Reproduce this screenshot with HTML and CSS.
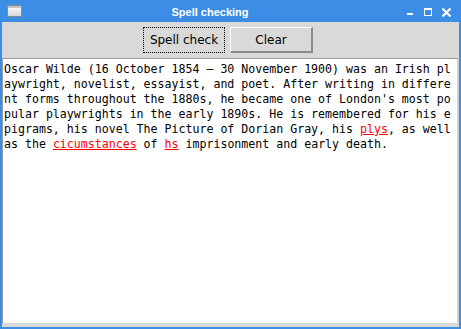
FILE: index.html
```html
<!DOCTYPE html>
<html>
<head>
<meta charset="utf-8">
<link rel="stylesheet" href="styles.css">
</head>
<body>
<div class="window">
  <div class="titlebar">
    <svg class="app-icon" width="15" height="12" viewBox="0 0 15 12">
      <defs>
        <linearGradient id="g" x1="0" y1="0" x2="0" y2="1">
          <stop offset="0" stop-color="#ffffff"/>
          <stop offset="1" stop-color="#d8d8d8"/>
        </linearGradient>
      </defs>
      <rect x="0.5" y="0.5" width="14" height="11" rx="1" fill="url(#g)" stroke="#8a8a8a"/>
      <rect x="1" y="1" width="13" height="2" fill="#c4c4c4"/>
    </svg>
    <div class="title">Spell checking</div>
    <svg class="controls" width="52" height="22" viewBox="0 0 52 22">
      <rect x="3" y="13" width="6" height="2" fill="#fff"/>
      <rect x="20.5" y="8.5" width="7" height="7" fill="none" stroke="#fff"/>
      <rect x="20" y="8" width="8" height="2" fill="#fff"/>
      <path d="M38.5 8.5 L46.5 16.5 M46.5 8.5 L38.5 16.5" stroke="#fff" stroke-width="2.2" fill="none"/>
    </svg>
  </div>
  <div class="frame">
    <div class="client">
      <div class="toolbar">
        <button class="btn btn-focus">Spell check</button>
        <button class="btn btn-raised">Clear</button>
      </div>
      <div class="textbox">
        <div class="line">Oscar Wilde (16 October 1854 – 30 November 1900) was an Irish pl</div>
        <div class="line">aywright, novelist, essayist, and poet. After writing in differe</div>
        <div class="line">nt forms throughout the 1880s, he became one of London's most po</div>
        <div class="line">pular playwrights in the early 1890s. He is remembered for his e</div>
        <div class="line">pigrams, his novel The Picture of Dorian Gray, his <span class="miss">plys</span>, as well</div>
        <div class="line">as the <span class="miss">cicumstances</span> of <span class="miss">hs</span> imprisonment and early death.</div>
      </div>
    </div>
  </div>
</div>
</body>
</html>
```

FILE: styles.css
```css
* { box-sizing: border-box; }
html, body {
  margin: 0;
  padding: 0;
  width: 461px;
  height: 329px;
  overflow: hidden;
  background: #3b8de5;
}
.window {
  width: 461px;
  height: 329px;
  display: flex;
  flex-direction: column;
  background: #3b8de5;
}
.titlebar {
  height: 22px;
  flex: none;
  display: flex;
  align-items: flex-start;
}
.app-icon {
  margin-left: 7px;
  margin-top: 5px;
  flex: none;
}
.title {
  flex: 1;
  text-align: center;
  color: #ffffff;
  font-family: "Liberation Sans", Arial, sans-serif;
  font-weight: bold;
  font-size: 11px;
  line-height: 14px;
  padding-top: 5px;
  padding-right: 6px;
}
.controls {
  flex: none;
  margin-right: 5px;
}
.frame {
  flex: 1;
  padding: 0 2px 2px 2px;
  display: flex;
}
.client {
  flex: 1;
  background: #d9d9d9;
  display: flex;
  flex-direction: column;
}
.toolbar {
  height: 36px;
  flex: none;
  display: flex;
  justify-content: center;
  align-items: flex-start;
  gap: 5px;
  padding-top: 5px;
  padding-right: 5px;
}
.btn {
  height: 26px;
  margin: 0;
  padding: 0;
  background: #d9d9d9;
  color: #000;
  font-family: "DejaVu Sans", sans-serif;
  font-size: 12px;
  line-height: 24px;
  border-radius: 0;
  outline: none;
}
.btn-focus {
  width: 82px;
  border: 1px dotted #000;
}
.btn-raised {
  width: 83px;
  border-top: 1px solid #ffffff;
  border-left: 1px solid #ffffff;
  border-right: 2px solid #8a8a8a;
  border-bottom: 2px solid #8a8a8a;
}
.textbox {
  flex: 1;
  background: #ffffff;
  border-top: 1px solid #9a9a9a;
  border-left: 1px solid #9a9a9a;
  border-right: 2px solid #d0d0d0;
  margin-bottom: 4px;
  padding: 3px 0 0 1px;
  font-family: "DejaVu Sans Mono", monospace;
  font-size: 11.6px;
  line-height: 15px;
  color: #000;
}
.line {
  white-space: pre;
  height: 15px;
}
.miss {
  color: #ff0000;
  text-decoration: underline;
  text-decoration-color: #ff0000;
}
```
